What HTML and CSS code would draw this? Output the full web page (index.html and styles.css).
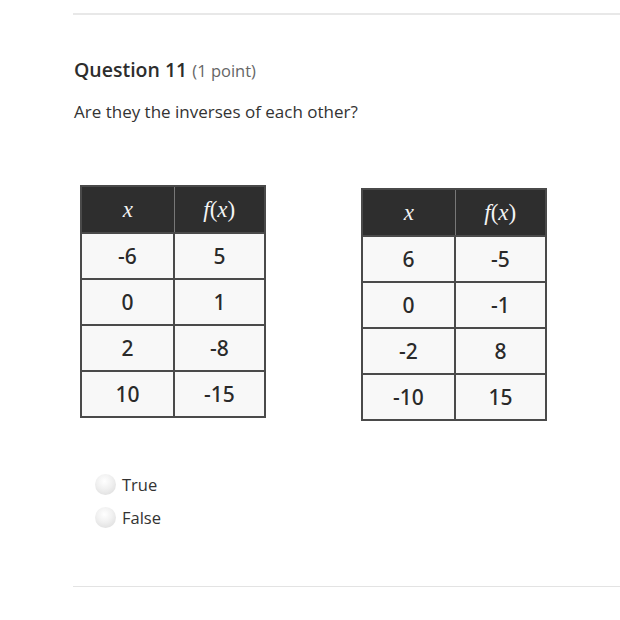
FILE: index.html
```html
<!DOCTYPE html>
<html>
<head>
<meta charset="utf-8">
<link rel="stylesheet" href="styles.css">
</head>
<body>
<div class="page">
  <div class="rule"></div>
  <h2 class="qtitle">Question 11 <span class="pts">(1 point)</span></h2>
  <p class="prompt">Are they the inverses of each other?</p>
  <div class="tables">
    <table class="ftable">
      <tr><th><i>x</i></th><th><i>f</i>(<i>x</i>)</th></tr>
      <tr><td>-6</td><td>5</td></tr>
      <tr><td>0</td><td>1</td></tr>
      <tr><td>2</td><td>-8</td></tr>
      <tr><td>10</td><td>-15</td></tr>
    </table>
    <table class="ftable second">
      <tr><th><i>x</i></th><th><i>f</i>(<i>x</i>)</th></tr>
      <tr><td>6</td><td>-5</td></tr>
      <tr><td>0</td><td>-1</td></tr>
      <tr><td>-2</td><td>8</td></tr>
      <tr><td>-10</td><td>15</td></tr>
    </table>
  </div>
  <div class="options">
    <label class="opt"><span class="radio"></span>True</label>
    <label class="opt"><span class="radio"></span>False</label>
  </div>
  <div class="rule bottom"></div>
</div>
</body>
</html>
```
FILE: styles.css
```css
html, body {
  margin: 0;
  padding: 0;
  background: #ffffff;
}
.page {
  font-family: "Open Sans", "Liberation Sans", sans-serif;
  color: #333333;
  padding-top: 13px;
}
.rule {
  margin-left: 73px;
  height: 2px;
  background: #e8e8e8;
}
.qtitle {
  margin: 42px 0 0 74px;
  font-size: 19.5px;
  font-weight: 600;
  line-height: 26px;
  color: #2d2d2d;
}
.pts {
  font-size: 16.5px;
  font-weight: 400;
  color: #666666;
}
.prompt {
  margin: 16px 0 0 74px;
  font-size: 17px;
  line-height: 24px;
  color: #333333;
}
.tables {
  display: flex;
  align-items: flex-start;
  margin: 61px 0 0 80px;
  gap: 95px;
}
.ftable {
  border-collapse: collapse;
  width: 186px;
  border: 2px solid #4a4a4a;
  font-family: "Noto Sans", "Open Sans", sans-serif;
  font-weight: 500;
  font-size: 21px;
  color: #2a2a2a;
}
.ftable.second {
  margin-top: 3px;
}
.ftable th {
  background: #2e2e2e;
  color: #f4f4f4;
  height: 45px;
  font-family: "Liberation Serif", "DejaVu Serif", serif;
  font-weight: 400;
  font-size: 23px;
  border-right: 1px solid #777777;
  padding: 0;
}
.ftable th:last-child {
  border-right: none;
}
.ftable td {
  height: 44px;
  text-align: center;
  padding: 0;
  border: 2px solid #4a4a4a;
  background: #f8f8f8;
  line-height: 1;
}
.ftable td:first-child {
  width: 91px;
}
.options {
  margin: 53px 0 0 95px;
  display: flex;
  flex-direction: column;
  gap: 12px;
}
.opt {
  display: flex;
  align-items: center;
  gap: 6px;
  font-size: 16.5px;
  line-height: 21px;
  color: #333333;
}
.radio {
  width: 21px;
  height: 21px;
  border-radius: 50%;
  background: radial-gradient(circle at 45% 35%, #ffffff 0%, #f0f0f0 45%, #d8d8d8 100%);
}
.rule.bottom {
  margin-top: 58px;
  height: 1px;
  background: #e3e3e3;
}
```
